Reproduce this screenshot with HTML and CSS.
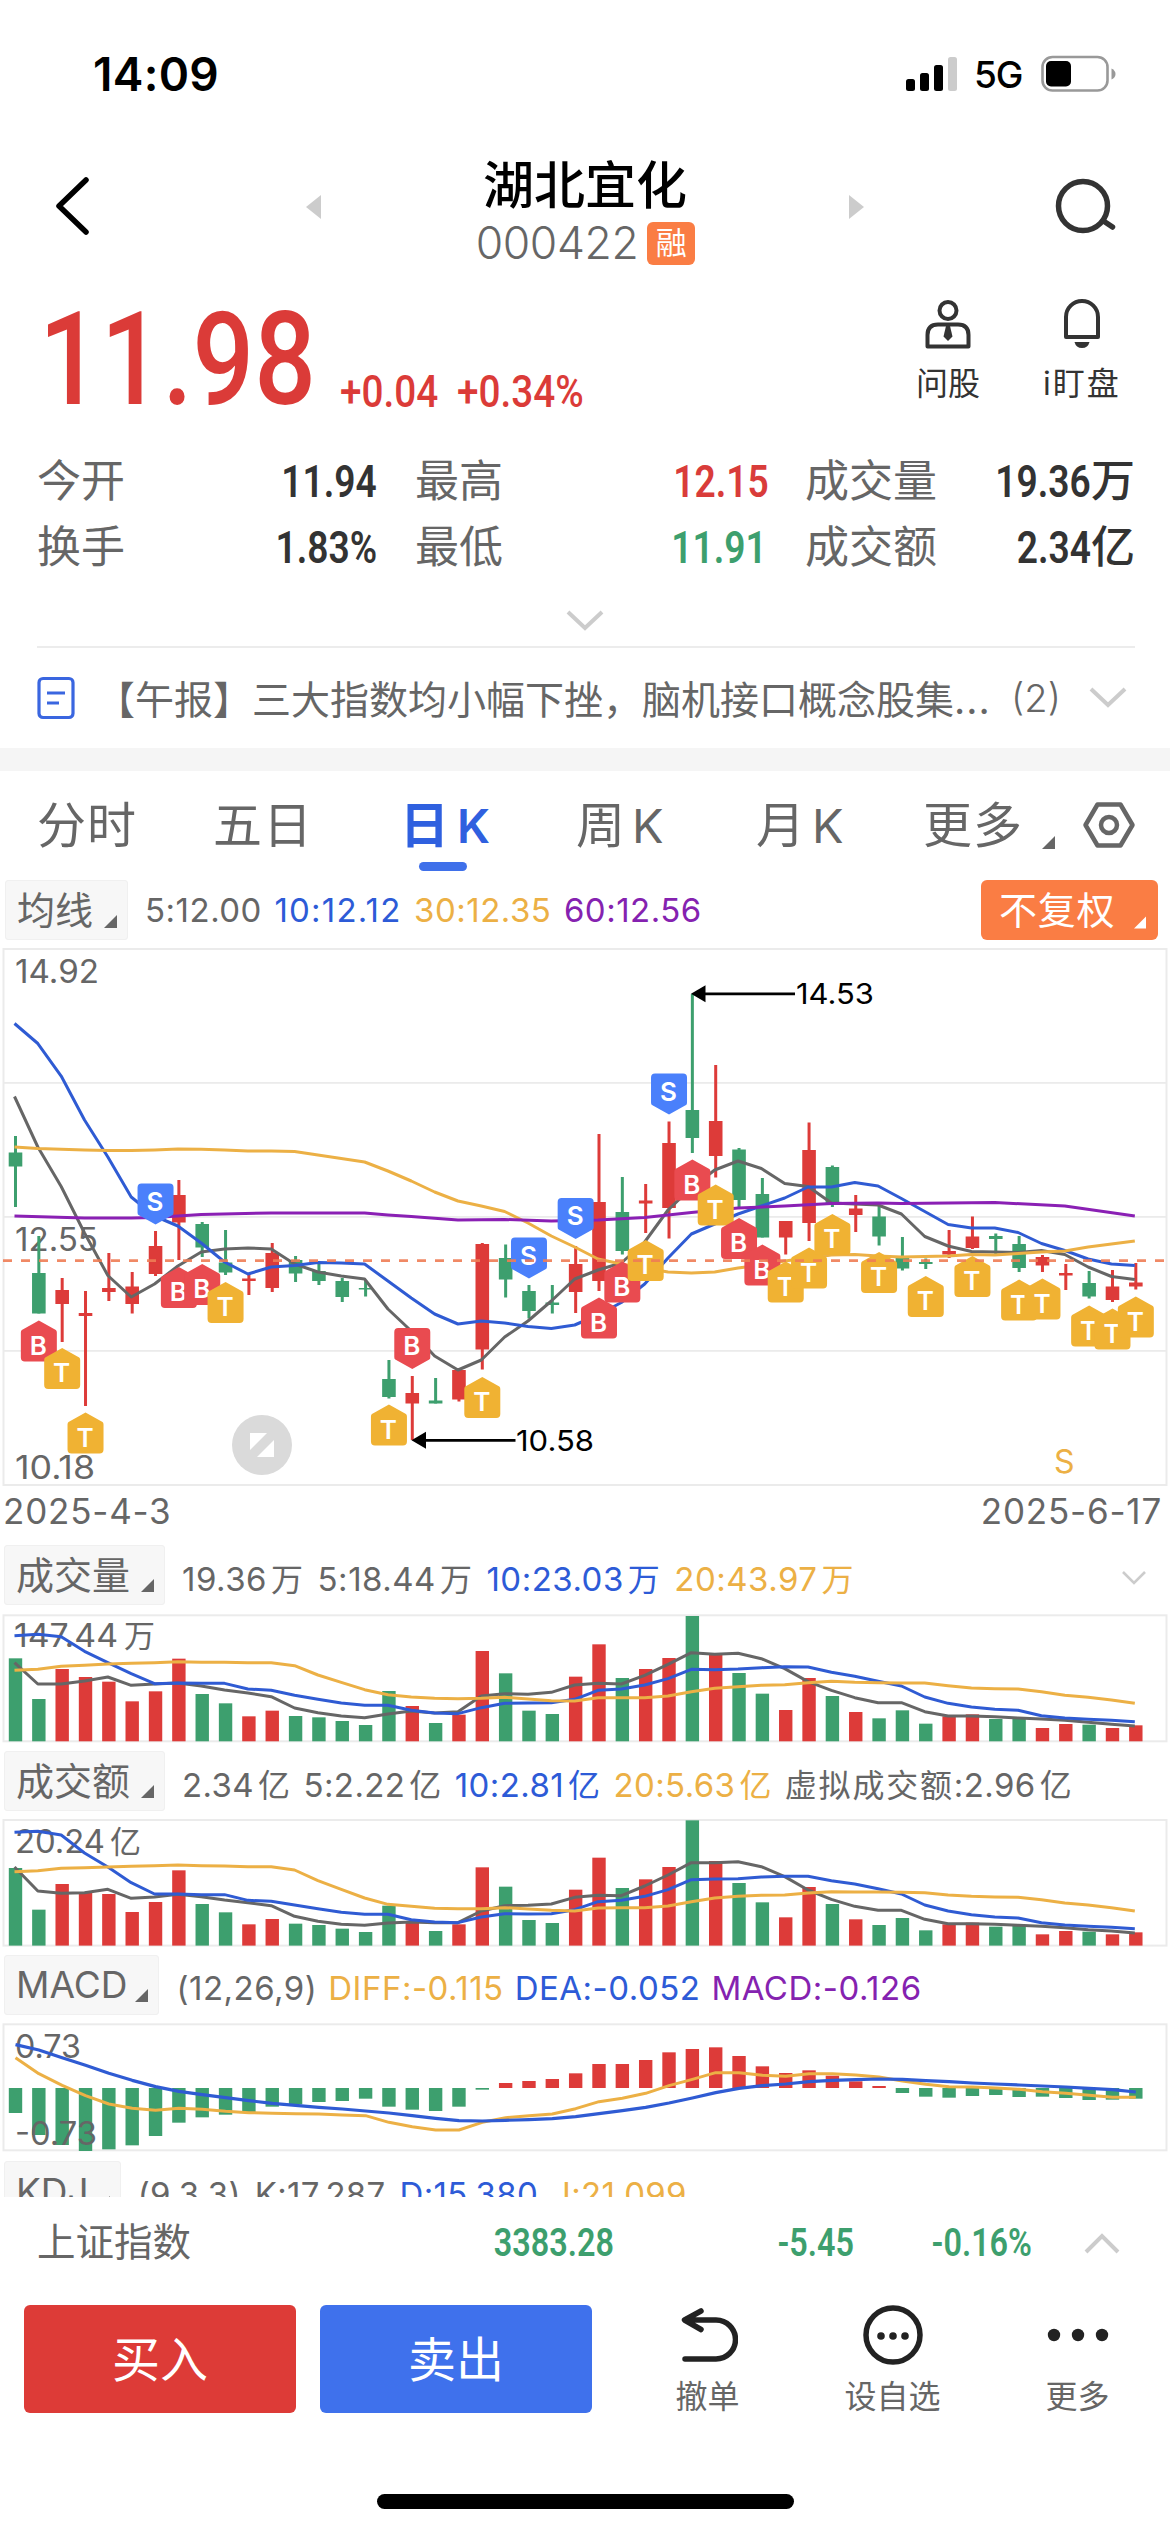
FILE: index.html
```html
<!DOCTYPE html>
<html lang="zh-CN">
<head>
<meta charset="utf-8">
<title>湖北宜化 000422</title>
<link rel="stylesheet" href="styles.css">
</head>
<body>
<div class="status">
  <span class="time">14:09</span>
  <svg class="signal" width="52" height="36" viewBox="0 0 52 36"><rect x="0" y="23" width="9" height="12" rx="2.5"/><rect x="14" y="17" width="9" height="18" rx="2.5"/><rect x="28" y="9" width="9" height="26" rx="2.5"/><rect x="42" y="1" width="9" height="34" rx="2.5" fill="#ccc"/></svg>
  <span class="net">5G</span>
  <svg width="75" height="38" viewBox="0 0 75 38"><rect x="1.5" y="2" width="65" height="33.5" rx="10" fill="none" stroke="#999" stroke-width="2.6"/><rect x="5" y="6" width="25" height="25.500" rx="5"/><path d="M70.500 13.500q4 2 4 5.500t-4 5.500z" fill="#999"/></svg>
</div>

<header class="nav">
  <svg class="back" width="40" height="64" viewBox="0 0 40 64"><path d="M33 6 6 32l27 26" fill="none" stroke="#000" stroke-width="5.500" stroke-linecap="round" stroke-linejoin="round"/></svg>
  <svg class="prev" width="16" height="26" viewBox="0 0 16 26"><path d="M16 1v24L1 13z" fill="#ccc"/></svg>
  <div class="title">
    <h1>湖北宜化</h1>
    <div class="code"><span>000422</span><b>融</b></div>
  </div>
  <svg class="next" width="16" height="26" viewBox="0 0 16 26"><path d="M0 1v24l15-12z" fill="#ccc"/></svg>
  <svg class="search" width="64" height="62" viewBox="0 0 64 62"><circle cx="29" cy="31" r="24.500" fill="none" stroke="#333" stroke-width="5.500"/><path d="M49.500 46l9 6" stroke="#333" stroke-width="5.500" stroke-linecap="round"/></svg>
</header>

<section class="quote">
  <span class="price">11.98</span>
  <span class="chg chg-abs">+0.04</span>
  <span class="chg chg-pct">+0.34%</span>
  <div class="tool ask">
    <svg width="50" height="50" viewBox="0 0 50 50" fill="none" stroke="#333" stroke-width="4"><circle cx="25" cy="11.500" r="8.500"/><path d="M4.500 47.500V36q0-10.500 10.500-10.500h20q10.500 0 10.500 10.500v11.500z" stroke-linejoin="round"/><path d="M23 27h4l2.500 10.500-4.500 4.500-4.500-4.500z" fill="#333" stroke="none"/></svg>
    <span>问股</span>
  </div>
  <div class="tool watch">
    <svg width="50" height="50" viewBox="0 0 50 50" fill="none" stroke="#333" stroke-width="4"><path d="M9 38V18a16 16 0 0 1 32 0v20z" stroke-linejoin="round"/><path d="M17.500 43h15q-1.500 6-7.500 6t-7.500-6z" fill="#333" stroke="none"/></svg>
    <span>i盯盘</span>
  </div>
</section>

<section class="stats">
  <span class="k">今开</span><span class="v"><i>11.94</i></span>
  <span class="k">最高</span><span class="v up"><i>12.15</i></span>
  <span class="k">成交量</span><span class="v"><i>19.36</i>万</span>
  <span class="k">换手</span><span class="v"><i>1.83%</i></span>
  <span class="k">最低</span><span class="v down low"><i>11.91</i></span>
  <span class="k">成交额</span><span class="v"><i>2.34</i>亿</span>
</section>
<div class="expand"><svg width="38" height="22" viewBox="0 0 38 22"><path d="M2 2l17 16L36 2" fill="none" stroke="#ccc" stroke-width="4"/></svg></div>

<section class="news">
  <svg width="38" height="44" viewBox="0 0 38 44" fill="none" stroke="#3a66e0" stroke-width="3.200"><rect x="2" y="2.500" width="34" height="39" rx="4"/><path d="M10 17h18M10 27h12"/></svg>
  <span class="headline">【午报】三大指数均小幅下挫，脑机接口概念股集<em>...</em></span>
  <span class="count">(2)</span>
  <svg width="38" height="22" viewBox="0 0 38 22"><path d="M2 2l17 16L36 2" fill="none" stroke="#ccc" stroke-width="4"/></svg>
</section>
<div class="band"></div>

<nav class="tabs">
  <span>分时</span><span>五日</span><span class="on">日<i>K</i></span><span>周<i>K</i></span><span>月<i>K</i></span><span class="more">更多</span>
  <svg class="tri" width="13" height="13" viewBox="0 0 13 13"><path d="M13 0v13H0z"/></svg>
  <svg class="gear" width="54" height="48" viewBox="0 0 54 48" fill="none" stroke="#666" stroke-width="4.500"><path d="M15.500 3.500h23L50.500 24l-12 20.500h-23L3.500 24z" stroke-linejoin="round"/><circle cx="27" cy="24" r="8"/></svg>
</nav>

<div class="legend ma">
  <span class="pick">均线<svg width="13" height="13" viewBox="0 0 13 13"><path d="M13 0v13H0z"/></svg></span>
  <span>5:12.00</span><span class="blue ones">10:12.12</span><span class="gold">30:12.35</span><span class="violet">60:12.56</span>
  <span class="adjust"><b>不复权</b><svg width="12" height="13" viewBox="0 0 13 13"><path d="M13 0v13H0z"/></svg></span>
</div>
<svg id="kline" class="chart" width="1170" height="550" viewBox="0 940 1170 550"></svg>
<div class="dates"><span>2025-4-3</span><span>2025-6-17</span></div>

<div class="legend vol">
  <span class="pick">成交量<svg width="13" height="13" viewBox="0 0 13 13"><path d="M13 0v13H0z"/></svg></span>
  <span>19.36<u>万</u></span><span>5:18.44<u>万</u></span><span class="blue">10:23.03<u>万</u></span><span class="gold">20:43.97<u>万</u></span>
  <svg class="fold" width="26" height="16" viewBox="0 0 26 16"><path d="M2 2l11 11L24 2" fill="none" stroke="#ccc" stroke-width="2.600"/></svg>
</div>
<svg id="volume" class="chart" width="1170" height="141" viewBox="0 1606 1170 141"></svg>

<div class="legend amt">
  <span class="pick">成交额<svg width="13" height="13" viewBox="0 0 13 13"><path d="M13 0v13H0z"/></svg></span>
  <span>2.34<u>亿</u></span><span>5:2.22<u>亿</u></span><span class="blue">10:2.81<u>亿</u></span><span class="gold">20:5.63<u>亿</u></span><span><u class="lead">虚拟成交额</u>:2.96<u>亿</u></span>
</div>
<svg id="amount" class="chart" width="1170" height="140" viewBox="0 1812 1170 140"></svg>

<div class="legend macd">
  <span class="pick">MACD<svg width="13" height="13" viewBox="0 0 13 13"><path d="M13 0v13H0z"/></svg></span>
  <span>(12,26,9)</span><span class="gold">DIFF:-0.115</span><span class="blue">DEA:-0.052</span><span class="violet">MACD:-0.126</span>
</div>
<svg id="macd" class="chart" width="1170" height="142" viewBox="0 2015 1170 142"></svg>

<div class="clip"><div class="legend kdj">
  <span class="pick">KDJ<svg width="13" height="13" viewBox="0 0 13 13"><path d="M13 0v13H0z"/></svg></span>
  <span>(9,3,3)</span><span>K:17.287</span><span class="blue">D:15.380</span><span class="gold">J:21.099</span>
</div></div>

<section class="index">
  <span class="name">上证指数</span><i class="a">3383.28</i><i class="b">-5.45</i><i class="c">-0.16%</i>
  <svg width="36" height="22" viewBox="0 0 36 22"><path d="M2 20L18 4l16 16" fill="none" stroke="#ccc" stroke-width="4"/></svg>
</section>
<footer class="actions">
  <button class="buy">买入</button><button class="sell">卖出</button>
  <div class="act">
    <svg width="60" height="60" viewBox="0 0 60 60" fill="none" stroke="#222" stroke-width="5.500" stroke-linecap="round" stroke-linejoin="round"><path d="M23 6 6.500 15 23 24.500M8 15H38a19.500 19.500 0 0 1 0 39H7"/></svg>
    <span>撤单</span>
  </div>
  <div class="act">
    <svg width="64" height="60" viewBox="0 0 64 60"><circle cx="32" cy="30" r="27" fill="none" stroke="#222" stroke-width="5.500"/><g fill="#222"><circle cx="20" cy="31" r="3.800"/><circle cx="32" cy="31" r="3.800"/><circle cx="44" cy="31" r="3.800"/></g></svg>
    <span>设自选</span>
  </div>
  <div class="act">
    <svg width="64" height="60" viewBox="0 0 64 60" fill="#222"><circle cx="8" cy="30" r="6.200"/><circle cx="32" cy="30" r="6.200"/><circle cx="56" cy="30" r="6.200"/></svg>
    <span>更多</span>
  </div>
</footer>
<div class="home"></div>
<script src="charts.js"></script>
</body>
</html>
```
FILE: styles.css
```css
* { box-sizing: border-box; }
body {
  margin: 0; width: 1170px; height: 2532px; overflow: hidden; background: #fff; color: #666;
  font-family: "Inter", "Noto Sans CJK SC", sans-serif;
}
svg { display: block; flex: none; }
i, em, u { font-style: normal; text-decoration: none; }
span, i { white-space: nowrap; }
.up { color: #d93c3a; }
.down { color: #3d9f6e; }
.blue { color: #2d5bd7; }
.gold { color: #ecb045; }
.violet { color: #8522b0; }

.status { display: flex; align-items: center; height: 148px; padding: 0 54px 0 93px; color: #000; }
.time { flex: 1; font-size: 46px; font-weight: 600; letter-spacing: .3px; }
.net { margin: 0 19px 0 16px; font-size: 37px; font-weight: 500; width: 48px; letter-spacing: -1px; }

.nav { display: flex; align-items: flex-start; height: 130px; }
.back { margin: 26px 0 0 53px; }
.prev { margin: 46px 0 0 212px; }
.title { width: 528px; padding-top: 8px; text-align: center; }
.title h1 { margin: 0; font-size: 51px; line-height: 60px; font-weight: 500; color: #000; }
.code { display: flex; justify-content: center; align-items: center; gap: 9px; height: 54px; font-size: 44.500px; font-weight: 300; padding-left: 1px; }
.code span { letter-spacing: -.4px; }
.code b { width: 48px; height: 43px; border-radius: 6px; background: #fa7d44; color: #fff; font-size: 31px; line-height: 41px; font-weight: 400; }
.next { margin: 46px 0 0 0; }
.search { margin: 27px 0 0 189px; }

.quote { display: flex; height: 170px; color: #db3b38; font-family: Roboto, sans-serif; }
.price { width: 296px; margin-left: 39px; font-size: 130px; line-height: 152px; font-weight: 500; transform: scaleX(.835); transform-origin: 0 0; padding-top: 6px; }
.chg { font-size: 45px; line-height: 52px; font-weight: 500; margin-top: 88px; transform: scaleX(.86); transform-origin: 0 0; }
.chg-abs { width: 117px; margin-left: 5px; }
.chg-pct { width: 429px; }
.tool { display: flex; flex-direction: column; align-items: center; width: 100px; padding-top: 21px; color: #333; font: 32px/44px "Inter", "Noto Sans CJK SC", sans-serif; }
.tool span { margin-top: 13px; }
.ask { margin-left: 12px; }
.watch { margin-left: 34px; letter-spacing: 2px; }

.stats { display: grid; grid-template-columns: 120px 220px 38px 140px 214px 36px 150px 180px; grid-auto-rows: 66px; padding-left: 37px; line-height: 66px; font-size: 44px; }
.stats .k:nth-of-type(6n+3) { grid-column: 4; }
.stats .k:nth-of-type(6n+5) { grid-column: 7; }
.v { text-align: right; color: #333; font-weight: 500; }
.v.up { color: #d93c3a; }
.v.down { color: #3d9f6e; }
.v i { display: inline-block; font-family: Roboto, sans-serif; font-size: 45px; line-height: 64px; font-weight: 600; transform: scaleX(.825); transform-origin: 100% 50%; }
.low { padding-right: 2px; }
.expand { height: 66px; padding: 30px 0 0 566px; }

.news { display: flex; align-items: center; height: 102px; margin: 0 35px 0 37px; border-top: 2px solid #ececec; font-size: 39px; }
.headline { width: 912px; margin: -3px 0 0 21px; white-space: nowrap; }
.headline em { letter-spacing: 1px; }
.count { width: 56px; margin: 0 25px 0 0; font-size: 38px; font-weight: 300; text-align: center; }
.band { height: 23px; background: #f5f5f5; }

.tabs { display: flex; align-items: center; height: 107px; padding-left: 37px; font-size: 49px; }
.tabs span { width: 176px; letter-spacing: 1px; position: relative; top: -3px; }
.tabs i { margin-left: 6px; font-size: 47px; }
.tabs span:nth-child(2) { width: 187px; }
.tabs .on { width: 176px; color: #2f60df; font-weight: 600; }
.tabs .on i { margin-left: 7px; }
.tabs .on::after { content: ""; position: absolute; left: 19px; bottom: -14px; width: 48px; height: 9px; border-radius: 5px; background: #3f70ea; }
.tabs span:nth-child(4) { width: 180px; }
.tabs span:nth-child(5) { width: 167px; }
.tabs .more { width: 119px; }
.tabs .tri { margin-top: 36px; fill: #666; }
.gear { margin-left: 27px; }

.legend { display: flex; align-items: center; height: 65px; padding-left: 4px; font-size: 33px; }
.legend > span { letter-spacing: .5px; margin-right: 14px; padding-top: 4px; }
.legend u { font-size: 32px; margin-left: 4px; }
.legend u.lead { margin-left: 0; letter-spacing: 1.800px; }
.legend .pick { display: flex; align-items: center; height: 60px; padding: 0 0 0 11px; margin-right: 17px; background: #f7f7f7; border: 1px solid #f0f0f0; border-radius: 3px; font-size: 38px; letter-spacing: 0; line-height: 50px; }
.pick svg { margin: 22px 10px 0 11px; fill: #666; }
.ma { height: 62px; padding: 2px 12px 0 5px; }
.ma > span { padding-top: 0; margin-right: 12.500px; }
.ma .ones { letter-spacing: 1.200px; }
.ma .adjust { display: flex; align-items: center; width: 177px; height: 60px; margin: 0 0 0 auto; padding-left: 18px; border-radius: 6px; background: #fa7d44; color: #fff; font-size: 38px; letter-spacing: .8px; }
.adjust b { font-weight: 400; margin-top: -6px; }
.adjust svg { margin: 24px 0 0 19px; fill: #fff; }
.amt > span { letter-spacing: .4px; margin-right: 13px; }
.fold { margin: 6px 23px 0 auto; }
.dates { display: flex; justify-content: space-between; height: 52px; padding: 0 8px 0 3px; font-size: 35px; line-height: 42px; letter-spacing: .8px; }
.macd { height: 63px; }
.macd > span { padding-top: 7px; letter-spacing: .5px; margin-right: 11px; }
.macd .pick, .kdj .pick { font-size: 37px; margin-right: 17px; }
.macd .pick svg, .kdj .pick svg { margin-left: 8px; }
.kdj > span { padding-top: 7px; letter-spacing: .3px; margin-right: 14px; }
.kdj .pick { padding-top: 2px; }
.clip { height: 39px; overflow: hidden; }
.chart text { font-family: "Inter", "Noto Sans CJK SC", sans-serif; }
.frame { fill: none; stroke: #ebebeb; stroke-width: 2; }

.index { display: flex; align-items: center; height: 91px; padding-left: 37px; font-size: 38.500px; }
.index i { font-family: Roboto, sans-serif; font-size: 39px; font-weight: 600; color: #3d9f6e; transform: scaleX(.83); transform-origin: 100% 50%; text-align: right; }
.name { width: 320px; margin-top: -7px; }
.a { width: 257px; }
.b { width: 240px; }
.c { width: 178px; }
.index svg { margin-left: 52px; }
.actions { display: flex; padding: 17px 0 0 24px; height: 165px; }
.actions button { width: 272px; height: 108px; margin: 0 24px 0 0; padding: 0; border: 0; border-radius: 6px; background: #dd3b37; color: #fff; font: 48px/102px "Noto Sans CJK SC", sans-serif; display: flex; justify-content: center; }
.actions .sell { margin-right: 23px; background: #3f71ec; }
.act { display: flex; flex-direction: column; align-items: center; width: 185px; font-size: 32px; line-height: 44px; }
.act span { margin-top: 10px; }
.home { width: 417px; height: 15px; margin: 41px 0 0 377px; border-radius: 8px; background: #000; }
```
FILE: charts.js
```js
const RED = '#dd3b39', GREEN = '#3d9f6e', GREY = '#666', BLUE = '#2f5bd3', GOLD = '#ecb045', VIOLET = '#8a20b4';
const X = i => 15.5 + 23.34 * i;

const rect = (x, y, w, h, c) => `<rect x="${x}" y="${y}" width="${w}" height="${h}" fill="${c}"/>`;
const line = (pts, c, w = 3) => `<polyline points="${pts.map(p => p.join()).join(' ')}" fill="none" stroke="${c}" stroke-width="${w}" stroke-linejoin="round"/>`;
const label = (x, y, s, len, size = 32, c = GREY) => `<text x="${x}" y="${y}" font-size="${size}" fill="${c}" textLength="${len}" lengthAdjust="spacingAndGlyphs">${s}</text>`;
const frame = (y0, y1) => `<rect class="frame" x="3.500" y="${y0}" width="1163" height="${y1 - y0}"/>`;

/* Daily candles: high, body top, body bottom, low, colour */
const candles = [
[196,212.5,226.5,267,'g'],[296,333,373.5,373.5,'g'],[338,350,364,402,'r'],[351,373,376,466,'r'],[313,348,352,361,'r'],[332,346.5,364,373.5,'r'],[291,306,334,336,'r'],[240,255,282.5,320,'r'],[282,284,307.5,317,'g'],[290,322.5,332.5,335,'g'],[334,338.5,341,355,'r'],[303,313,348,352,'r'],[316,320,333.5,342,'g'],[323,331,341,345,'g'],[338,341,357,362,'g'],[340,348,349.5,356.5,'g'],[420,439,457,458.5,'g'],[436,453,463.5,500,'r'],[438,460.5,463.5,463.5,'g'],[430,430,459.5,461.5,'r'],[303,304,409.5,429.5,'r'],[304.5,318,339.5,357.5,'g'],[345,351,371,378.5,'g'],[345,362.5,365,373.5,'g'],[306,324,352,373,'r'],[194,262,341,351,'r'],[237,272,311,314.5,'g'],[244,260.5,263.5,293,'r'],[181.5,203,268,298.5,'r'],[54,170,198,213,'g'],[125,181,216,237.5,'r'],[208,209.5,260,268.5,'g'],[238,254,297.5,297.5,'g'],[281,281,297.5,314.5,'r'],[182.5,210,283,301,'r'],[225.5,227,265,267,'g'],[255,268.5,275,292,'r'],[266,276.5,296.5,305.5,'g'],[297,317,328.5,330.5,'g'],[318.5,322,324,329,'g'],[290,311,314.5,318,'r'],[276.5,296.5,308,309,'r'],[293.5,296,299,315.5,'g'],[296,304,328,332,'g'],[315,317,325.5,332,'r'],[324,333,335.5,350,'r'],[331,343,356.5,358.5,'g'],[330,346.5,360,362,'r'],[323,342.5,346.5,349.5,'r']];

const ma5 = [156.5,207,246.5,293,335.5,357,344,326,312,309,308,309,324,332,336,339,369,391,416,430,420,397,381,361,339,330,323,302,270,248,230,221,228.5,243.5,246.5,263,264,265,274,296.5,306,311.5,312,312.5,310.5,314.5,327,336.5,339.5];
const ma10 = [83.5,103.5,136,180,217,257,276,286,303,322,334,327,325.5,322.5,323,324,341,358,374,384,381,383,386.5,388.5,385,375,362.5,344,318,294,284,274,266,258,247,247,242.5,246,258.5,271.5,284.5,288,288,292.5,303.5,310.5,319,324,325.5];
const ma30 = [207,208.5,209.3,210,210.5,210.5,210,209,209.3,210,211,211,211.5,215,218.5,222,231,241,252,261,266,271.5,283,296,307,319,324,328,332,333,332,328,325,321,318,315,314.5,316,317,316.5,316,314.5,315,313.5,312,311,307,304,301];
const ma60 = [[0,276],[3,278],[5,278],[6,277.5],[8,274.500],[11,273],[15,273],[16,275],[17,276.5],[19,280],[21,279.500],[23,281],[25,280],[27,277.5],[29,272.5],[31,268],[33,266],[35,263.5],[37,263],[38,263.500],[42,262.5],[45,266],[48,276]];

/* Trade marks: candle index, letter, tip position, direction (1 = tip up, -1 = tip down) */
const marks = [[1,'B',380.5,1],[2,'T',408,1],[3,'T',472.5,1],[6,'S',284.5,-1],[7,'B',327,1],[8,'B',324,1],[9,'T',342,1],[16,'T',464.5,1],[17,'B',429,-1],[20,'T',437,1],[22,'S',338.5,-1],[24,'S',299,-1],[25,'B',357.5,1],[26,'B',321.5,1],[27,'T',300,1],[28,'S',174.5,-1],[29,'B',219.5,1],[30,'T',244.5,1],[31,'B',278,1],[32,'B',304.5,1],[33,'T',321.5,1],[34,'T',307.5,1],[35,'T',274,1],[37,'T',312,1],[39,'T',336,1],[41,'T',316,1],[43,'T',339.5,1],[44,'T',338.5,1],[46,'T',365.5,1],[47,'T',368.5,1],[48,'T',356.5,1]];

function mark([i, t, y, d]) {
  const c = { B: '#e94b50', T: '#f0b233', S: '#4a80fb' }[t];
  const body = `M0 0L17 ${9.5 * d}Q18 ${10 * d} 18 ${12 * d}V${37 * d}Q18 ${41 * d} 14 ${41 * d}H-14Q-18 ${41 * d} -18 ${37 * d}V${12 * d}Q-18 ${10 * d} -17 ${9.5 * d}Z`;
  return `<g transform="translate(${X(i)} ${940 + y})"><path d="${body}" fill="${c}"/><text y="${d > 0 ? 34 : -14}" x="-.5" text-anchor="middle" font-size="26" font-weight="600" fill="#fff">${t}</text></g>`;
}
const arrow = (x, y) => `<path d="M${x} ${y}l14.500-8.500v17z"/><path d="M${x + 10} ${y}h94" stroke="#000" stroke-width="2.800"/>`;

let s = '';
for (const y of [1083, 1217, 1351]) s += rect(4, y - 1, 1162, 1.8, '#ebebeb');
s += frame(949, 1485);
s += label(15, 983, '14.92', 84) + label(15, 1251, '12.55', 83) + label(15, 1479, '10.18', 80);
candles.forEach(([h, t, b, l, c], i) => {
  c = c === 'r' ? RED : GREEN;
  s += rect(X(i) - 1.5, 940 + h, 3, l - h, c) + rect(X(i) - 6.8, 940 + t, 13.6, b - t, c);
});
const series = (a, dy) => a.map((v, i) => [X(i) - 1, v + dy]);
s += line(series(ma5, 940), GREY) + line(series(ma10, 940), BLUE) + line(series(ma30, 940), GOLD) + line(ma60.map(([i, v]) => [X(i) - 1, v + 940]), VIOLET);
s += marks.map(mark).join('');
s += '<path d="M3 1260.700H1166" stroke="#ef7d55" stroke-width="2.800" stroke-dasharray="9 9" opacity=".9"/>';
s += arrow(691, 993.800) + arrow(411.500, 1440.300) + label(796, 1004, '14.53', 78, 29, '#000') + label(516, 1451, '10.58', 78, 29, '#000');
s += '<circle cx="262" cy="1445" r="30" fill="#dadada"/><path d="M250 1433h17l-17 17zM274 1457h-17l17-17z" fill="#fff"/>';
s += `<text x="1054" y="1473" font-size="32" fill="${GOLD}">S</text>`;
document.getElementById('kline').innerHTML = s;

const colours = 'ggrrrrrrggrrggggg' + 'rgrrgggrrgrrgrggrrgrggg' + 'rrggrrgrr';
const tone = i => colours[i] === 'r' ? RED : GREEN;

function columns(id, top, bottom, base, tops, lines, text) {
  let o = frame(top, bottom) + text;
  tops.forEach((v, i) => { o += rect(X(i) - 6.7, base + v / 3, 13.4, bottom - base - v / 3, tone(i)); });
  [GREY, BLUE, GOLD].forEach((c, n) => { o += line(lines[n].map((v, i) => [X(i) - 1, base + v / 3]), c); });
  document.getElementById(id).innerHTML = o;
}

columns('volume', 1614.3, 1740.3, 1480,
[532,654,564,588,602,661,631,533,639,667,706,689,705,709,720,732,630,675,726,701,510,577,689,699,587,490,591,564,531,405,520,576,638,687,591,645,693,712,688,728,706,700,714,712,741,729,731,741,733],
[[545,609,609,600,588,613,609,606,615,627,636,647,681,695,705,710,699,690,696,692,645,638,640,634,612,607,609,583,550,515,520,517,533,563,602,628,650,665,665,692,705,705,707,711,714,718,724,730,735],
[464,460,467,511,545,578,608,606,607,607,624,628,643,655,666,673,673,688,696,698,680,667,666,665,655,628,624,612,593,565,566,564,560,557,558,574,586,601,615,648,667,678,685,688,704,711,715,718,722],
[568,565,556,553,549,547,545,542,544,544,545,545,554,582,604,626,641,648,652,653,652,649,654,659,660,650,650,650,645,632,622,617,613,611,605,601,604,605,606,606,614,621,623,624,632,643,649,657,667]],
label(14, 1646, '147.44', 104) + label(124, 1646, '万', 31, 31));

columns('amount', 1819, 1944.6, 1480,
[1161,1286,1209,1234,1239,1293,1263,1168,1269,1294,1330,1314,1328,1332,1343,1353,1274,1325,1350,1330,1159,1217,1317,1326,1226,1130,1221,1195,1158,1018,1140,1206,1264,1309,1218,1269,1315,1332,1311,1348,1330,1325,1337,1335,1360,1350,1352,1360,1354],
[[1158,1230,1237,1235,1225,1252,1248,1240,1247,1257,1265,1274,1306,1321,1330,1333,1326,1323,1325,1325,1290,1274,1273,1269,1249,1243,1244,1215,1182,1145,1145,1142,1157,1187,1227,1255,1276,1288,1288,1315,1328,1328,1330,1333,1336,1340,1346,1350,1356],
[1054,1051,1062,1116,1158,1205,1239,1239,1241,1241,1258,1261,1272,1283,1294,1300,1300,1316,1323,1325,1308,1298,1299,1298,1286,1262,1258,1246,1226,1196,1194,1193,1188,1186,1186,1199,1209,1223,1239,1272,1290,1301,1308,1311,1325,1332,1336,1339,1343],
[1172,1169,1162,1160,1158,1156,1154,1152,1154,1155,1157,1157,1167,1199,1225,1251,1270,1276,1282,1283,1283,1280,1284,1288,1290,1281,1280,1280,1275,1262,1251,1246,1243,1242,1236,1232,1233,1233,1234,1235,1242,1246,1248,1249,1256,1266,1272,1280,1290]],
label(15, 1852, '20.24', 90) + label(110, 1852, '亿', 31, 31));

const hist = [486,552,582,600,595,583,555,515,499,491,484,467,460,453,450,443,467,476,480,467,416,396,390,384,367,339,339,327,304,294,289,315,346,366,358,374,391,405,426,437,440,435,432,438,437,441,447,446,443];
const diff = [320,368,403,434,459,472,478,472,475,481,485,487,488,489,492,494,514,527,537,537,514,500,494,489,473,452,442,427,404,385,365,365,373,376,368,368,372,378,390,400,407,408,411,415,422,427,433,439,439];
const dea = [281,297,320,343,367,388,407,421,431,440,449,457,463,469,474,480,486,494,502,509,510,508,506,503,497,488,479,469,456,441,425,412,404,399,392,388,386,384,385,389,392,396,399,402,405,408,412,416,423];
let m = frame(2023.3, 2149.3);
hist.forEach((v, i) => { m += rect(X(i) - 6.7, 1950 + Math.min(v, 411) / 3, 13.4, Math.abs(v - 411) / 3, v > 411 ? GREEN : RED); });
m += label(15, 2057, '0.73', 66) + label(15, 2144, '-0.73', 82);
m += line(diff.map((v, i) => [X(i), 1950 + v / 3]), GOLD) + line(dea.map((v, i) => [X(i), 1950 + v / 3]), BLUE, 3.2);
document.getElementById('macd').innerHTML = m;
```
